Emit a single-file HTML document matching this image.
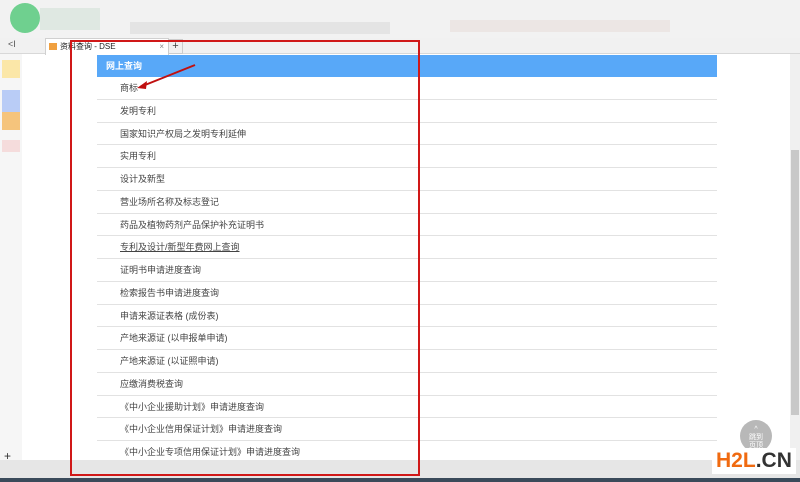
<!DOCTYPE html><html><head><meta charset="utf-8"><style>
body{margin:0;width:800px;height:482px;overflow:hidden;background:#fff;font-family:"Liberation Sans","Noto Sans CJK SC",sans-serif;position:relative}
.a{position:absolute}
.row{position:absolute;left:97px;width:620px;height:22.75px;border-bottom:1px solid #e2e2e2;box-sizing:border-box;font-size:9px;color:#444;line-height:22px;padding-left:23px}
</style></head><body>
<div class="a" style="left:0;top:0;width:800px;height:38px;background:#f2f2f2"></div>
<div class="a" style="left:10px;top:3px;width:30px;height:30px;border-radius:50%;background:#6fd08f"></div>
<div class="a" style="left:40px;top:8px;width:60px;height:22px;background:#dfe8e2"></div>
<div class="a" style="left:130px;top:22px;width:260px;height:12px;background:#e4e4e4"></div>
<div class="a" style="left:450px;top:20px;width:220px;height:12px;background:#ece6e4"></div>
<div class="a" style="left:0;top:38px;width:800px;height:15px;background:#f1f1f1;border-bottom:1px solid #d8d8d8"></div>
<div class="a" style="left:8px;top:39px;font-size:9px;color:#555">&lt;I</div>
<div class="a" style="left:45px;top:38px;width:122px;height:16px;background:#fff;border:1px solid #d0d0d0;border-bottom:none;font-size:8px;line-height:15px;color:#222"><span style="display:inline-block;width:8px;height:7px;background:#f0a040;margin:0 3px 0 3px;vertical-align:middle"></span>资料查询 - DSE<span style="float:right;margin-right:4px;color:#888">×</span></div>
<div class="a" style="left:168px;top:39px;width:13px;height:13px;border:1px solid #ccc;font-size:11px;line-height:12px;text-align:center;color:#444">+</div>
<div class="a" style="left:0;top:54px;width:22px;height:406px;background:#f6f6f6"></div>
<div class="a" style="left:2px;top:60px;width:18px;height:18px;background:#fbe7a8"></div>
<div class="a" style="left:2px;top:90px;width:18px;height:22px;background:#b9ccf6"></div>
<div class="a" style="left:2px;top:112px;width:18px;height:18px;background:#f5c47c"></div>
<div class="a" style="left:2px;top:140px;width:18px;height:12px;background:#f5dcdc"></div>
<div class="a" style="left:97px;top:55px;width:620px;height:22px;background:#58a8f8;color:#fff;font-size:9px;font-weight:bold;line-height:22px;padding-left:9px;box-sizing:border-box">网上查询</div>
<div class="row" style="top:77px">商标</div>
<div class="row" style="top:99.75px">发明专利</div>
<div class="row" style="top:122.5px">国家知识产权局之发明专利延伸</div>
<div class="row" style="top:145.25px">实用专利</div>
<div class="row" style="top:168px">设计及新型</div>
<div class="row" style="top:190.75px">营业场所名称及标志登记</div>
<div class="row" style="top:213.5px">药品及植物药剂产品保护补充证明书</div>
<div class="row" style="top:236.25px"><u>专利及设计/新型年费网上查询</u></div>
<div class="row" style="top:259px">证明书申请进度查询</div>
<div class="row" style="top:281.75px">检索报告书申请进度查询</div>
<div class="row" style="top:304.5px">申请来源证表格 (成份表)</div>
<div class="row" style="top:327.25px">产地来源证 (以申报单申请)</div>
<div class="row" style="top:350px">产地来源证 (以证照申请)</div>
<div class="row" style="top:372.75px">应缴消费税查询</div>
<div class="row" style="top:395.5px">《中小企业援助计划》申请进度查询</div>
<div class="row" style="top:418.25px">《中小企业信用保证计划》申请进度查询</div>
<div class="row" style="top:441px">《中小企业专项信用保证计划》申请进度查询</div>
<div class="a" style="left:790px;top:54px;width:10px;height:406px;background:#f0f0f0"></div>
<div class="a" style="left:791px;top:150px;width:8px;height:265px;background:#c8c8c8"></div>
<div class="a" style="left:740px;top:420px;width:32px;height:32px;border-radius:50%;background:#b8b8b8;color:#fff;font-size:7px;text-align:center;line-height:8px;padding-top:6px;box-sizing:border-box">^<br>跳到<br>页顶</div>
<div class="a" style="left:0;top:460px;width:800px;height:22px;background:#e6e6e6"></div>
<div class="a" style="left:0;top:478px;width:800px;height:4px;background:#3a4a5a"></div>
<div class="a" style="left:4px;top:449px;font-size:12px;color:#333">+</div>
<div class="a" style="left:712px;top:448px;background:#fff;padding:0 4px;font-size:21px;font-weight:bold;line-height:26px"><span style="color:#f06a10">H2L</span><span style="color:#333">.CN</span></div>
<div class="a" style="left:70px;top:40px;width:346px;height:432px;border:2px solid #d01818"></div>
<svg class="a" style="left:0;top:0" width="800" height="482"><line x1="195" y1="65" x2="140" y2="87" stroke="#c01010" stroke-width="2"/><path d="M137 88 L147 81 L146 89 Z" fill="#c01010"/></svg>
</body></html>
